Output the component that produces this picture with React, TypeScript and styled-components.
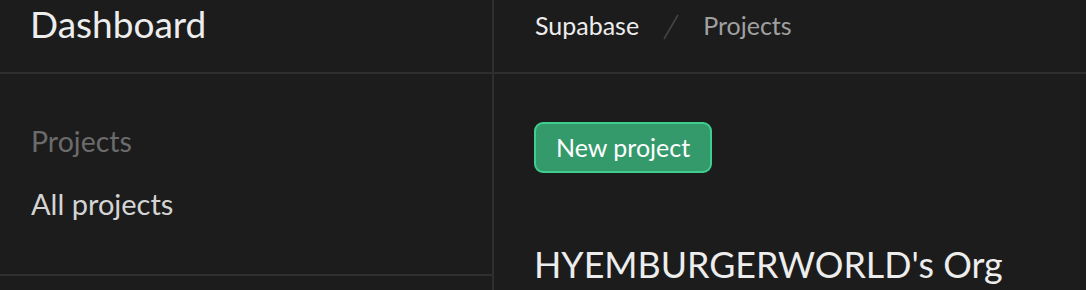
import React from "react";
import styled, { createGlobalStyle } from "styled-components";

const Global = createGlobalStyle`
  html, body { margin: 0; padding: 0; background: #1c1c1c; }
  body { font-family: Lato, "Noto Sans", sans-serif; overflow: hidden; }
`;

const Shell = styled.div`
  display: flex;
  width: 1086px;
  height: 290px;
  background: #1c1c1c;
  overflow: hidden;
`;

const Sidebar = styled.aside`
  width: 492px;
  flex: none;
  border-right: 2px solid #2e2e2e;
  display: flex;
  flex-direction: column;
`;

const SideHeader = styled.div`
  box-sizing: border-box;
  border-bottom: 2px solid #2e2e2e;
  height: 74px;
  padding: 6px 30px 0;
`;

const Title = styled.h1`
  margin: 0;
  font-weight: 400;
  font-size: 37px;
  line-height: 35px;
  color: #ededed;
`;

const Menu = styled.nav`
  height: 202px;
  box-sizing: border-box;
  border-bottom: 2px solid #2e2e2e;
  padding: 53px 31px 0;
  display: flex;
  flex-direction: column;
  gap: 35px;
`;

const MenuLabel = styled.div<{ $muted?: boolean }>`
  font-size: ${(p) => (p.$muted ? "28.5px" : "29px")};
  line-height: 28px;
  color: ${(p) => (p.$muted ? "#6b6b6b" : "#d4d4d4")};
`;

const Main = styled.main`
  flex: 1;
  display: flex;
  flex-direction: column;
`;

const TopBar = styled.div`
  height: 74px;
  box-sizing: border-box;
  border-bottom: 2px solid #2e2e2e;
  padding: 11px 41px 0;
  display: flex;
  align-items: flex-start;
`;

const Crumb = styled.span<{ $active?: boolean }>`
  font-size: 25px;
  line-height: 28px;
  color: ${(p) => (p.$active ? "#ededed" : "#a0a0a0")};
`;

const Slash = styled.span`
  width: 64px;
  display: flex;
  justify-content: center;
  padding-top: 3px;
`;

const Content = styled.div`
  padding: 48px 40px 0;
  display: flex;
  flex-direction: column;
  align-items: flex-start;
`;

const Button = styled.button`
  height: 51px;
  box-sizing: border-box;
  padding: 0 20px;
  border-radius: 9px;
  border: 2px solid #3ecf8e;
  background: #349a6b;
  color: #ffffff;
  font-family: Lato, "Noto Sans", sans-serif;
  font-size: 25px;
  line-height: 1;
  cursor: pointer;
`;

const OrgHeading = styled.h2`
  margin: 74px 0 0;
  font-weight: 400;
  font-size: 35.8px;
  line-height: 35px;
  color: #ededed;
`;

export default function App() {
  return (
    <>
      <Global />
      <Shell>
        <Sidebar>
          <SideHeader>
            <Title>Dashboard</Title>
          </SideHeader>
          <Menu>
            <MenuLabel $muted>Projects</MenuLabel>
            <MenuLabel>All projects</MenuLabel>
          </Menu>
        </Sidebar>
        <Main>
          <TopBar>
            <Crumb $active>Supabase</Crumb>
            <Slash>
              <svg width="20" height="26" viewBox="0 0 20 26">
                <line x1="17" y1="1" x2="3" y2="25" stroke="#444" strokeWidth="1.5" />
              </svg>
            </Slash>
            <Crumb>Projects</Crumb>
          </TopBar>
          <Content>
            <Button>New project</Button>
            <OrgHeading>HYEMBURGERWORLD's Org</OrgHeading>
          </Content>
        </Main>
      </Shell>
    </>
  );
}
